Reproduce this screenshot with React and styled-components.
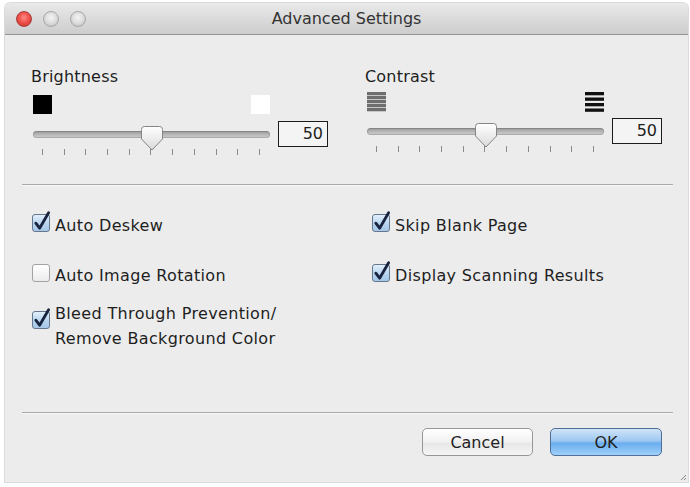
import React from "react";
import styled, { createGlobalStyle } from "styled-components";

const Global = createGlobalStyle`
  html, body { margin: 0; padding: 0; background: #ffffff; }
  body { font-family: "DejaVu Sans", "Liberation Sans", sans-serif; color: #1e1e1e; }
  * { box-sizing: border-box; }
`;

const Page = styled.div`
  padding: 3px 2px 5px 5px;
`;

const Window = styled.div`
  width: 683px;
  height: 479px;
  background: #ececec;
  display: flex;
  flex-direction: column;
  border-radius: 5px 5px 0 0;
  box-shadow: 0 0 0 1px rgba(0, 0, 0, 0.14);
  position: relative;
`;

const TitleBar = styled.div`
  height: 32px;
  flex: none;
  display: flex;
  align-items: center;
  position: relative;
  padding-left: 11px;
  background: linear-gradient(#e9e9e9, #cdcdcd);
  border-bottom: 1px solid #959595;
  border-radius: 5px 5px 0 0;
`;

const Lights = styled.div`
  display: flex;
  gap: 11px;
`;

const Light = styled.span`
  width: 16px;
  height: 16px;
  border-radius: 50%;
  background: ${(p) =>
    p.$red
      ? "radial-gradient(circle at 50% 40%, #ff8b86 0%, #f0524c 45%, #c4302b 100%)"
      : "radial-gradient(circle at 50% 40%, #f4f4f4 0%, #dadada 55%, #b5b5b5 100%)"};
  border: 1px solid ${(p) => (p.$red ? "#a8403c" : "#a8a8a8")};
`;

const Title = styled.div`
  position: absolute;
  left: 0;
  right: 0;
  text-align: center;
  font-size: 16px;
  line-height: 19px;
  color: #333;
  pointer-events: none;
`;

const SliderSection = styled.div`
  display: flex;
  gap: 37px;
  padding: 32px 0 0 26px;
  flex: none;
`;

const Group = styled.div`
  width: 297px;
  display: flex;
  flex-direction: column;
`;

const Label = styled.div`
  font-size: 16px;
  line-height: 19px;
  color: #1e1e1e;
  letter-spacing: 0.2px;
`;

const GroupBody = styled.div`
  padding-left: 2px;
  display: flex;
  flex-direction: column;
`;

const SwatchRow = styled.div`
  width: 237px;
  height: 20px;
  margin-top: ${(p) => p.$top}px;
  display: flex;
  justify-content: space-between;
  align-items: flex-start;
`;

const Swatch = styled.span`
  width: 19px;
  height: 19px;
  background: ${(p) => p.$color};
`;

const SliderRow = styled.div`
  margin-top: 6px;
  height: 26px;
  display: flex;
  align-items: center;
  gap: 8px;
`;

const TrackArea = styled.div`
  position: relative;
  width: 237px;
  height: 26px;
  display: flex;
  align-items: center;
`;

const Track = styled.div`
  width: 100%;
  height: 7px;
  border-radius: 4px;
  background: linear-gradient(#979797, #bdbdbd 60%, #cbcbcb);
  box-shadow: inset 0 0 0 1px rgba(0, 0, 0, 0.14);
`;

const ThumbSvg = styled.svg`
  position: absolute;
  top: 5px;
  width: 22px;
  height: 25px;
  overflow: visible;
`;

const ValueBox = styled.div`
  width: 50px;
  height: 26px;
  border: 1px solid #1c1c1c;
  background: #f4f4f4;
  font-size: 16px;
  line-height: 24px;
  text-align: right;
  padding-right: 4px;
  color: #1e1e1e;
`;

const Ticks = styled.div`
  width: 237px;
  margin-top: 2px;
  height: 6px;
  padding: 0 10px 0 9px;
  display: flex;
  justify-content: space-between;
`;

const Tick = styled.span`
  width: 1px;
  height: 6px;
  background: #8c8c8c;
`;

const Separator = styled.div`
  height: 1px;
  flex: none;
  margin: ${(p) => p.$top}px 15px 0 17px;
  background: #a9a9a9;
  box-shadow: 0 1px 0 #f8f8f8;
`;

const ChecksSection = styled.div`
  flex: 1;
  display: grid;
  grid-template-columns: 340px 1fr;
  padding: 28px 0 0 27px;
  align-content: start;
`;

const Column = styled.div`
  display: flex;
  flex-direction: column;
`;

const CheckRow = styled.label`
  display: flex;
  align-items: flex-start;
  gap: 5px;
  margin-top: ${(p) => p.$top}px;
  font-size: 16px;
  line-height: 25px;
  letter-spacing: 0.35px;
  color: #1e1e1e;
`;

const Box = styled.span`
  position: relative;
  flex: none;
  width: 18px;
  height: 18px;
  margin-top: ${(p) => p.$top}px;
  border-radius: 3px;
  border: 1px solid ${(p) => (p.$checked ? "#66778d" : "#a2a2a2")};
  background: ${(p) =>
    p.$checked
      ? "linear-gradient(#e3f0fc, #b7d4ee 55%, #a6c7e8)"
      : "linear-gradient(#ffffff, #ececec)"};
`;

const CheckSvg = styled.svg`
  position: absolute;
  left: -1px;
  top: -1px;
  width: 18px;
  height: 18px;
  overflow: visible;
`;

const Footer = styled.div`
  flex: none;
  display: flex;
  justify-content: flex-end;
  gap: 17px;
  padding: 15px 26px 26px 0;
`;

const Button = styled.button`
  width: ${(p) => p.$w}px;
  height: 28px;
  border-radius: 5px;
  font-family: "DejaVu Sans", "Liberation Sans", sans-serif;
  font-size: 16px;
  color: #1e1e1e;
  border: 1px solid ${(p) => (p.$primary ? "#4f6f96" : "#979797")};
  background: ${(p) =>
    p.$primary
      ? "linear-gradient(#cfe4f8, #9fc8f1 45%, #6aaeef 55%, #9fd0fa)"
      : "linear-gradient(#ffffff, #f1f1f1 50%, #e7e7e7 55%, #f5f5f5)"};
  padding: 0;
`;

const Grip = styled.svg`
  position: absolute;
  right: 1px;
  bottom: 1px;
  width: 8px;
  height: 8px;
`;

function Thumb() {
  return (
    <ThumbSvg viewBox="0 0 22 25" style={{ left: "calc(50% - 11px)" }}>
      <defs>
        <linearGradient id="thumbg" x1="0" y1="0" x2="0" y2="1">
          <stop offset="0" stopColor="#ffffff" />
          <stop offset="1" stopColor="#dadada" />
        </linearGradient>
      </defs>
      <path
        d="M3.5 0.5 H18.5 Q21.5 0.5 21.5 3.5 V13 L11 24 L0.5 13 V3.5 Q0.5 0.5 3.5 0.5 Z"
        fill="url(#thumbg)"
        stroke="#858585"
        strokeWidth="1"
      />
    </ThumbSvg>
  );
}

function LinesIcon({ dark }) {
  const bars = dark ? [0, 5.5, 11, 16.5] : [0, 4, 8, 12, 16];
  return (
    <svg width="19" height="20" viewBox="0 0 19 20">
      {bars.map((y) => (
        <rect
          key={y}
          x="0"
          y={y}
          width="19"
          height="3.3"
          fill={dark ? "#111" : "#6e6e6e"}
        />
      ))}
    </svg>
  );
}

function SliderGroup({ label, left, right, swatchTop }) {
  return (
    <Group>
      <Label>{label}</Label>
      <GroupBody>
        <SwatchRow $top={swatchTop}>
          {left}
          {right}
        </SwatchRow>
        <SliderRow>
          <TrackArea>
            <Track />
            <Thumb />
          </TrackArea>
          <ValueBox>50</ValueBox>
        </SliderRow>
        <Ticks>
          {Array.from({ length: 11 }).map((_, i) => (
            <Tick key={i} />
          ))}
        </Ticks>
      </GroupBody>
    </Group>
  );
}

function Check({ checked, label, top = 0, boxTop = 1 }) {
  return (
    <CheckRow $top={top}>
      <Box $checked={checked} $top={boxTop}>
        {checked && (
          <CheckSvg viewBox="0 0 18 18">
            <path
              d="M3.8 9.2 L7.6 14.2 L16.6 -1.2"
              fill="none"
              stroke="#17233f"
              strokeWidth="2.8"
              strokeLinecap="round"
              strokeLinejoin="round"
            />
          </CheckSvg>
        )}
      </Box>
      <span>{label}</span>
    </CheckRow>
  );
}

export default function App() {
  return (
    <Page>
      <Global />
      <Window>
        <TitleBar>
          <Lights>
            <Light $red />
            <Light />
            <Light />
          </Lights>
          <Title>Advanced Settings</Title>
        </TitleBar>

        <SliderSection>
          <SliderGroup
            label="Brightness"
            swatchTop={9}
            left={<Swatch $color="#000" />}
            right={<Swatch $color="#fff" />}
          />
          <SliderGroup
            label="Contrast"
            swatchTop={6}
            left={<LinesIcon />}
            right={<LinesIcon dark />}
          />
        </SliderSection>

        <Separator $top={29} />

        <ChecksSection>
          <Column>
            <Check checked label="Auto Deskew" />
            <Check checked={false} label="Auto Image Rotation" top={25} />
            <Check
              checked
              top={13}
              boxTop={10}
              label={
                <>
                  Bleed Through Prevention/
                  <br />
                  Remove Background Color
                </>
              }
            />
          </Column>
          <Column>
            <Check checked label="Skip Blank Page" />
            <Check checked label="Display Scanning Results" top={25} />
          </Column>
        </ChecksSection>

        <Separator $top={0} />

        <Footer>
          <Button $w={111}>Cancel</Button>
          <Button $w={112} $primary>
            OK
          </Button>
        </Footer>
        <Grip viewBox="0 0 8 8">
          <path d="M7 2 L2 7 M7 5 L5 7" stroke="#888" strokeWidth="1" />
        </Grip>
      </Window>
    </Page>
  );
}
